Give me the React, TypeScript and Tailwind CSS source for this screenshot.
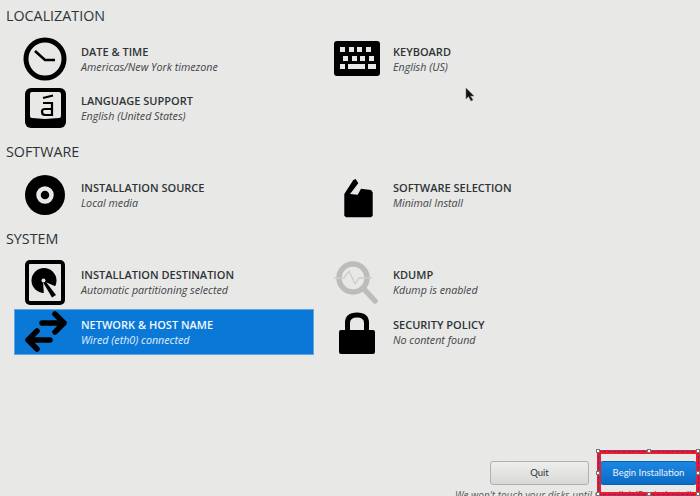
import React from 'react';

const ClockIcon = () => (
  <svg width="46" height="46" viewBox="0 0 46 46">
    <circle cx="23" cy="23" r="19" fill="none" stroke="#000" strokeWidth="5" />
    <path d="M13 15 L23 24 L33 24" fill="none" stroke="#000" strokeWidth="2.6" />
  </svg>
);

const LanguageIcon = () => (
  <svg width="46" height="46" viewBox="0 0 46 46">
    <rect x="3" y="3" width="41" height="40" rx="6" fill="#000" />
    <path d="M8 9 Q8 7 10 7 H37 Q39 7 39 9 V31 Q39 33 37 33 L23 34 L10 33 Q8 33 8 31 Z" fill="#e8e8e7" />
    <path d="M21 13 L31 10.5 M21 18 H30 V30 H23 Q20 30 20 26.5 Q20 24 23 24 H30" fill="none" stroke="#000" strokeWidth="2.2" />
  </svg>
);

const KeyboardIcon = () => (
  <svg width="46" height="36" viewBox="0 0 46 36">
    <rect x="0" y="0" width="46" height="35" rx="3" fill="#000" />
    <g fill="#e8e8e7">
      <rect x="6" y="6" width="5" height="5" />
      <rect x="15" y="6" width="5" height="5" />
      <rect x="23" y="6" width="5" height="5" />
      <rect x="32" y="6" width="5" height="5" />
      <rect x="9" y="15" width="5" height="5" />
      <rect x="18" y="15" width="5" height="5" />
      <rect x="26" y="15" width="5" height="5" />
      <rect x="35" y="15" width="5" height="5" />
      <rect x="6" y="23" width="5" height="5" />
      <rect x="14" y="23" width="17" height="5" />
      <rect x="34" y="23" width="8" height="5" />
    </g>
  </svg>
);

const DiscIcon = () => (
  <svg width="46" height="46" viewBox="0 0 46 46">
    <circle cx="23" cy="23" r="20" fill="#000" />
    <circle cx="23" cy="23" r="6.5" fill="none" stroke="#e8e8e7" strokeWidth="4.5" />
  </svg>
);

const PackageIcon = () => (
  <svg width="46" height="46" viewBox="0 0 46 46">
    <path d="M10.3 22 L19.3 8 L21.7 7 L24.3 11.3 L16 22 L23.7 22.7 L27 16.7 L37 18 L38.7 20.3 V43.7 L37 45.3 H12 L10.3 43.7 Z" fill="#000" />
  </svg>
);

const DiskIcon = () => (
  <svg width="46" height="46" viewBox="0 0 46 46">
    <rect x="3" y="1" width="40" height="45" rx="5" fill="#000" />
    <rect x="7" y="5" width="32" height="37" rx="1" fill="#e8e8e7" />
    <circle cx="22" cy="21.5" r="12.5" fill="#000" />
    <path d="M21 22 L35 28 L37 41 L22 37 Z" fill="#e8e8e7" />
    <path d="M20.5 22.5 L22.5 21 L34 36 L30 38.5 Z" fill="#000" />
    <circle cx="21.5" cy="21.5" r="2" fill="#e8e8e7" />
  </svg>
);

const NetworkIcon = () => (
  <svg width="46" height="46" viewBox="0 0 46 46">
    <path d="M20 14 H42 M33 5 L42 14 L33 23" fill="none" stroke="#000" strokeWidth="5.5" strokeLinecap="round" strokeLinejoin="round" />
    <path d="M28 31 H6 M15 22 L6 31 L15 40" fill="none" stroke="#000" strokeWidth="5.5" strokeLinecap="round" strokeLinejoin="round" />
  </svg>
);

const KdumpIcon = () => (
  <svg width="46" height="46" viewBox="0 0 46 46">
    <circle cx="19" cy="19" r="14" fill="none" stroke="#bcbcbb" strokeWidth="5.5" />
    <path d="M0 19 H10 L15 12 L21 25 L25 19 H38" fill="none" stroke="#cdcdcc" strokeWidth="1.3" />
    <path d="M30 30 L41 42" stroke="#bcbcbb" strokeWidth="5.5" strokeLinecap="round" />
  </svg>
);

const LockIcon = () => (
  <svg width="46" height="46" viewBox="0 0 46 46">
    <path d="M13.5 21 V14 Q13.5 6 23 6 Q32.5 6 32.5 14 V21" fill="none" stroke="#000" strokeWidth="5" />
    <rect x="5" y="21" width="36" height="24" rx="2" fill="#000" />
  </svg>
);

interface SpokeProps {
  icon: React.ReactNode;
  title: string;
  status: string;
  active?: boolean;
}

const Spoke: React.FC<SpokeProps> = ({ icon, title, status, active }) => (
  <div className={`flex items-center h-[46px] border ${active ? 'bg-[#0a78d7] border-[#5fa5e2]' : 'border-transparent'}`}>
    <div className="w-[66px] shrink-0 flex justify-center pr-[6px]">{icon}</div>
    <div className="flex flex-col pt-px leading-[15px]">
      <span className={`text-[11px] font-semibold ${active ? 'text-[#f2f7fc]' : 'text-[#2e3436]'}`}>{title}</span>
      <span className={`mt-px text-[10.7px] italic ${active ? 'text-[#e3effa]' : 'text-[#3f4446]'}`}>{status}</span>
    </div>
  </div>
);

const Heading = ({ children }: { children: React.ReactNode }) => (
  <h2 className="text-[14.3px] leading-[18px] text-[#2e3436] pl-[6px]">{children}</h2>
);

const Handle = ({ className }: { className: string }) => (
  <div className={`absolute w-[4px] h-[4px] bg-white border border-[#777] ${className}`}></div>
);

export default function App() {
  return (
    <div className="relative w-[700px] h-[496px] overflow-hidden bg-[#e8e8e7] flex flex-col font-['Open_Sans',sans-serif]">
      <div className="pt-[7px]">
        <Heading>LOCALIZATION</Heading>
        <div className="grid grid-cols-[300px_300px] gap-x-[12px] gap-y-[3px] pl-[14px] mt-[11px]">
          <Spoke icon={<ClockIcon />} title="DATE & TIME" status="Americas/New York timezone" />
          <Spoke icon={<KeyboardIcon />} title="KEYBOARD" status="English (US)" />
          <Spoke icon={<LanguageIcon />} title="LANGUAGE SUPPORT" status="English (United States)" />
        </div>
        <div className="mt-[12px]">
          <Heading>SOFTWARE</Heading>
        </div>
        <div className="grid grid-cols-[300px_300px] gap-x-[12px] pl-[14px] mt-[11px]">
          <Spoke icon={<DiscIcon />} title="INSTALLATION SOURCE" status="Local media" />
          <Spoke icon={<PackageIcon />} title="SOFTWARE SELECTION" status="Minimal Install" />
        </div>
        <div className="mt-[12px]">
          <Heading>SYSTEM</Heading>
        </div>
        <div className="grid grid-cols-[300px_300px] gap-x-[12px] gap-y-[4px] pl-[14px] mt-[11px]">
          <Spoke icon={<DiskIcon />} title="INSTALLATION DESTINATION" status="Automatic partitioning selected" />
          <Spoke icon={<KdumpIcon />} title="KDUMP" status="Kdump is enabled" />
          <Spoke icon={<NetworkIcon />} title="NETWORK & HOST NAME" status="Wired (eth0) connected" active />
          <Spoke icon={<LockIcon />} title="SECURITY POLICY" status="No content found" />
        </div>
      </div>

      <div className="mt-auto flex flex-col items-end pr-[3px] -mb-[6px]">
        <div className="flex gap-[11px]">
          <button className="w-[99px] h-[24px] rounded-[3px] border border-[#b0b0ae] bg-gradient-to-b from-[#eeeeed] to-[#d8d8d6] text-[9.5px] font-['Lato',sans-serif] text-[#2e3436]">Quit</button>
          <button className="w-[97px] h-[24px] rounded-[3px] border border-[#0a5fb0] bg-gradient-to-b from-[#1b87e3] to-[#0a6cc4] text-[9.5px] font-['Lato',sans-serif] text-[#eaf3fb]">Begin Installation</button>
        </div>
        <p className="mt-[3px] w-[245px] -mr-[3px] whitespace-nowrap text-[10px] leading-[14px] italic text-[#55595b]">We won't touch your disks until you click 'Begin Installation'.</p>
      </div>

      {/* cursor in the capture */}
      <svg className="absolute left-[465px] top-[87px]" width="11" height="15" viewBox="0 0 11 15">
        <path d="M1 1 V12 L3.5 9.5 L6 14 L8 13 L5.5 9 H9 Z" fill="#111" stroke="#777" strokeWidth="0.6" />
      </svg>

      {/* red annotation frame with its handles */}
      <div className="absolute left-[597px] top-[450px] w-[103px] h-[46px] border-[3px] border-[#ec1c2e]">
        <div className="absolute -inset-[2px] border border-dashed border-[#3a3a9a]"></div>
        <div className="absolute inset-0 border border-[#ec1c2e]"></div>
      </div>
      <Handle className="left-[596px] top-[449px]" />
      <Handle className="left-[647px] top-[449px]" />
      <Handle className="left-[696px] top-[449px]" />
      <Handle className="left-[596px] top-[471px]" />
      <Handle className="left-[696px] top-[471px]" />
      <Handle className="left-[596px] top-[492px]" />
      <Handle className="left-[647px] top-[492px]" />
      <Handle className="left-[696px] top-[492px]" />
    </div>
  );
}
